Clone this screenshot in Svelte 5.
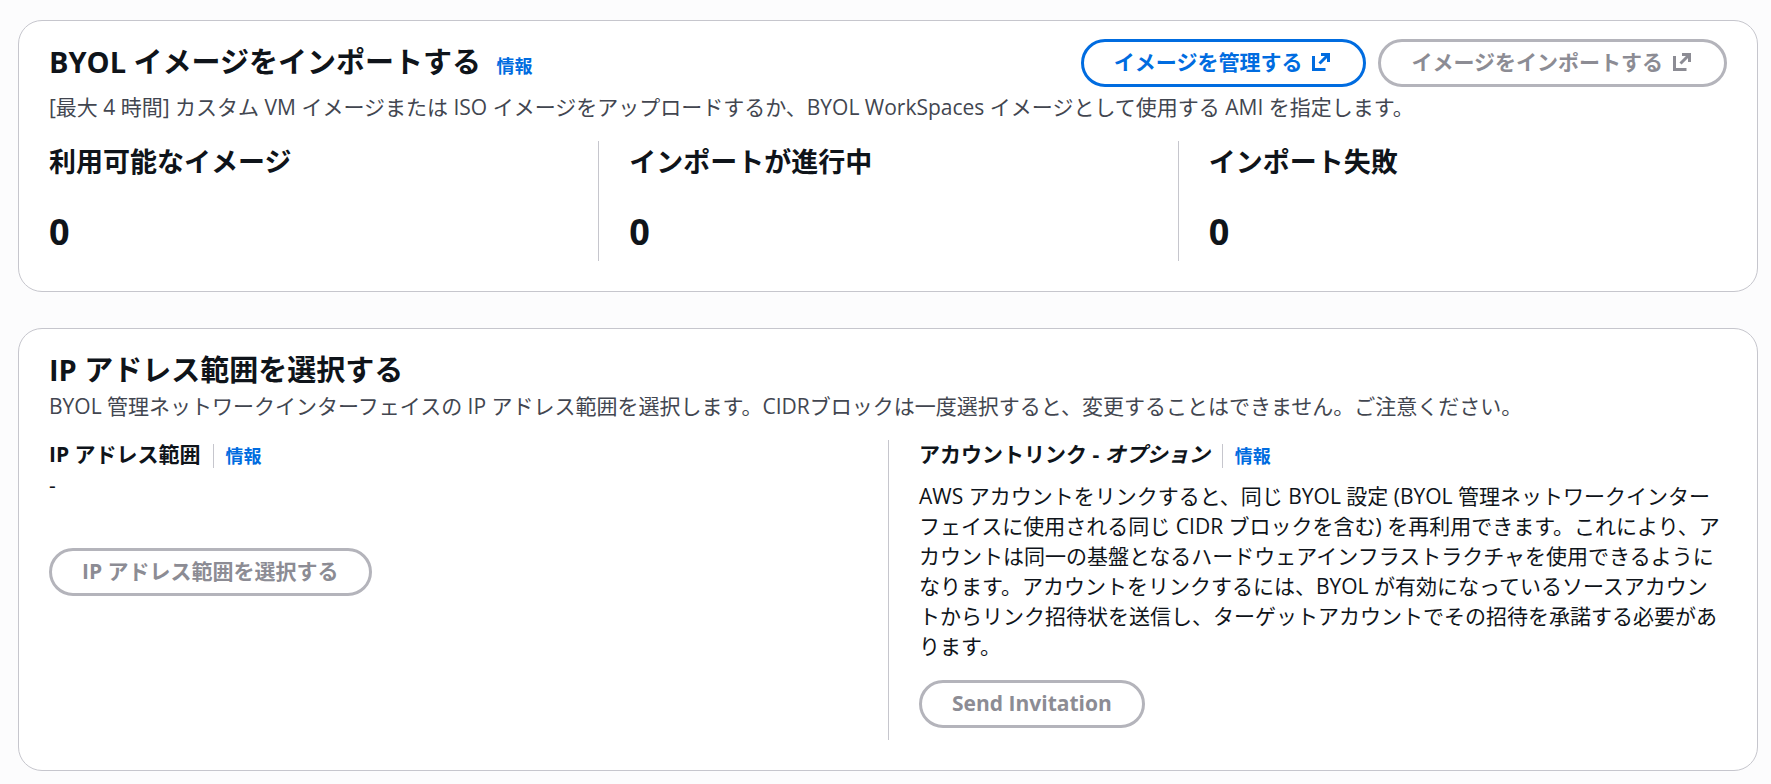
<script>
    // BYOL setup page: image import and IP range cards

    const counters = [
        { label: '利用可能なイメージ', value: 0 },
        { label: 'インポートが進行中', value: 0 },
        { label: 'インポート失敗', value: 0 }
    ];
</script>

{#snippet externalIcon()}
    <svg class="icon" viewBox="0 0 16 16" aria-hidden="true">
        <path d="M8 3h5v5M13 3 7 9M3 4v9h8" />
    </svg>
{/snippet}

<main class="page">
    <section class="card">
        <header class="card-header">
            <div class="title-row">
                <h2>BYOL イメージをインポートする <a class="info" href="#import-info">情報</a></h2>
                <div class="actions">
                    <button class="btn primary">イメージを管理する {@render externalIcon()}</button>
                    <button class="btn" disabled>イメージをインポートする {@render externalIcon()}</button>
                </div>
            </div>
            <p class="description spaced">[最大 4 時間] カスタム VM イメージまたは ISO イメージをアップロードするか、BYOL WorkSpaces イメージとして使用する AMI を指定します。</p>
        </header>
        <div class="columns three">
            {#each counters as counter}
                <div class="column">
                    <h3>{counter.label}</h3>
                    <div class="count">{counter.value}</div>
                </div>
            {/each}
        </div>
    </section>

    <section class="card">
        <header class="card-header">
            <div class="title-row compact">
                <h2>IP アドレス範囲を選択する</h2>
            </div>
            <p class="description">BYOL 管理ネットワークインターフェイスの IP アドレス範囲を選択します。CIDRブロックは一度選択すると、変更することはできません。ご注意ください。</p>
        </header>
        <div class="columns two">
            <div class="column">
                <div class="label-row">
                    <h4>IP アドレス範囲</h4>
                    <a class="info divided" href="#ip-info">情報</a>
                </div>
                <div class="value">-</div>
                <button class="btn" disabled>IP アドレス範囲を選択する</button>
            </div>
            <div class="column">
                <div class="label-row">
                    <h4>アカウントリンク - <em>オプション</em></h4>
                    <a class="info divided" href="#link-info">情報</a>
                </div>
                <p class="link-text">AWS アカウントをリンクすると、同じ BYOL 設定 (BYOL 管理ネットワークインターフェイスに使用される同じ CIDR ブロックを含む) を再利用できます。これにより、アカウントは同一の基盤となるハードウェアインフラストラクチャを使用できるようになります。アカウントをリンクするには、BYOL が有効になっているソースアカウントからリンク招待状を送信し、ターゲットアカウントでその招待を承諾する必要があります。</p>
                <button class="btn" disabled>Send Invitation</button>
            </div>
        </div>
    </section>
</main>

<style>
    :global(body) {
        margin: 0;
        background: #fcfcfd;
    }

    .page {
        display: flex;
        flex-direction: column;
        gap: 36px;
        padding: 20px 13px 13px 18px;
        font-family: "Open Sans", "Noto Sans CJK JP", sans-serif;
        font-size: 21px;
        line-height: 30px;
        color: #0f141a;
    }

    .card {
        background: white;
        border: 1px solid #c6c6cd;
        border-radius: 24px;
        padding-bottom: 30px;
    }

    .card-header {
        padding: 18px 30px 19px;
    }

    .title-row {
        display: flex;
        align-items: center;
        justify-content: space-between;
        gap: 12px;
        min-height: 48px;
    }

    .title-row.compact {
        min-height: 44px;
    }

    h2, h3, h4, p {
        margin: 0;
    }

    h2 {
        padding-top: 2px;
        font-size: 29px;
        line-height: 36px;
    }

    h3 {
        font-size: 27px;
        line-height: 42px;
    }

    h4 {
        font-size: 21px;
        line-height: 28px;
    }

    .info {
        color: #006ce0;
        font-size: 18px;
        font-weight: bold;
        text-decoration: none;
    }

    h2 .info {
        margin-left: 8px;
    }

    .info.divided {
        border-left: 1px solid #c6c6cd;
        margin-left: 12px;
        padding-left: 12px;
        line-height: 24px;
    }

    .description {
        color: #424650;
    }

    .description.spaced {
        margin-top: 5px;
    }

    .actions {
        display: flex;
        gap: 12px;
    }

    .btn {
        display: inline-flex;
        align-items: center;
        gap: 7px;
        padding: 5px 30px 7px;
        border: 3px solid #b4b4bb;
        border-radius: 30px;
        background: white;
        color: #8c8c94;
        font-family: inherit;
        font-size: 21px;
        font-weight: bold;
        line-height: 30px;
        white-space: nowrap;
    }

    .btn.primary {
        border-color: #006ce0;
        color: #006ce0;
        cursor: pointer;
    }

    .icon {
        width: 24px;
        height: 24px;
        fill: none;
        stroke: currentColor;
        stroke-width: 2;
    }

    .columns {
        display: grid;
    }

    .three {
        grid-template-columns: repeat(3, 1fr);
    }

    .two {
        grid-template-columns: repeat(2, 1fr);
    }

    .column {
        padding: 0 30px;
    }

    .column + .column {
        border-left: 1px solid #c6c6cd;
    }

    .three .column {
        padding-bottom: 4px;
    }

    .two .column {
        padding-bottom: 12px;
    }

    .count {
        margin-top: 24px;
        font-size: 36px;
        font-weight: bold;
        line-height: 50px;
    }

    .label-row {
        display: flex;
        align-items: flex-end;
    }

    .value {
        margin: 2px 0 48px;
    }

    .link-text {
        margin: 13px 0 19px;
    }
</style>
